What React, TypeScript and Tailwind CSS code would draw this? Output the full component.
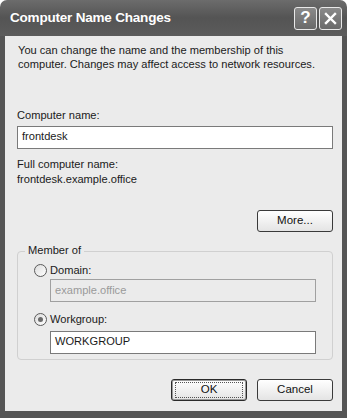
import React from 'react';

const font = { fontFamily: '"Liberation Sans", Arial, sans-serif' };

const Radio: React.FC<{ checked?: boolean }> = ({ checked }) => (
  <span className="relative flex h-[13px] w-[13px] shrink-0 items-center justify-center rounded-full border border-[#5a5a5a] bg-gradient-to-br from-[#dcdcdc] to-white">
    {checked && <span className="h-[5px] w-[5px] rounded-full bg-[#6a6a6a]" />}
  </span>
);

const Button: React.FC<{ label: string; isDefault?: boolean }> = ({ label, isDefault }) => (
  <div
    className={
      'flex h-[22px] w-[76px] items-center justify-center rounded-[3px] border bg-gradient-to-b from-white to-[#e4e4e4] text-[11.5px] text-[#111] ' +
      (isDefault ? 'border-[#2a2a2a] shadow-[inset_0_0_0_1px_#9a9a9a]' : 'border-[#3a3a3a]')
    }
  >
    {isDefault ? (
      <span className="flex h-[16px] w-[68px] items-center justify-center border border-dotted border-[#555]">{label}</span>
    ) : (
      label
    )}
  </div>
);

const App: React.FC = () => {
  return (
    <div className="h-[418px] w-[350px] bg-white" style={font}>
      <div className="flex h-[418px] w-[347px] flex-col">
        {/* title bar */}
        <div className="flex h-[36px] shrink-0 items-center justify-between rounded-t-[7px] bg-gradient-to-b from-[#6c6c6c] via-[#545454] to-[#5c5c5c] pl-[10px] pr-[5px]">
          <span className="text-[13.5px] font-bold tracking-[-0.2px] text-white">Computer Name Changes</span>
          <div className="flex gap-[2px]">
            <div className="flex h-[23px] w-[23px] items-center justify-center rounded-[3px] border border-[#e8e8e8] bg-gradient-to-b from-[#8a8a8a] to-[#6a6a6a] text-[17px] font-bold text-white">
              ?
            </div>
            <div className="flex h-[23px] w-[23px] items-center justify-center rounded-[3px] border border-[#e8e8e8] bg-gradient-to-b from-[#8a8a8a] to-[#6a6a6a]">
              <svg width="13" height="13" viewBox="0 0 13 13">
                <path d="M2 2 L11 11 M11 2 L2 11" stroke="white" strokeWidth="2.4" strokeLinecap="square" />
              </svg>
            </div>
          </div>
        </div>

        {/* body */}
        <div className="flex flex-1 flex-col border-x-[5px] border-b-[7px] border-[#555] bg-[#ebebeb] pl-[12px] pr-[9px] text-[11.1px] leading-[13.5px] text-[#1a1a1a]">
          <p className="mt-[8px] pl-[1px]">
            You can change the name and the membership of this
            <br />
            computer. Changes may affect access to network resources.
          </p>

          <p className="mt-[38px]">Computer name:</p>
          <div className="mt-[3px] flex h-[23px] items-center border border-[#7a7a7a] bg-white px-[4px]">frontdesk</div>

          <p className="mt-[9px]">Full computer name:</p>
          <p className="mt-[2px]">frontdesk.example.office</p>

          <div className="mt-[23px] flex justify-end">
            <Button label="More..." />
          </div>

          {/* group box */}
          <div className="relative mt-[19px] h-[109px] rounded-[4px] border border-[#d0d0d0] px-[16px] pt-[12px]">
            <span className="absolute left-[7px] top-[-8px] bg-[#ebebeb] px-[3px]">Member of</span>
            <div className="flex items-center gap-[3px]">
              <Radio />
              <span>Domain:</span>
            </div>
            <div className="ml-[16px] mt-[2px] flex h-[23px] items-center border border-[#a0a0a0] bg-[#ebebeb] px-[4px] text-[#9a9a9a]">
              example.office
            </div>
            <div className="mt-[11px] flex items-center gap-[3px]">
              <Radio checked />
              <span>Workgroup:</span>
            </div>
            <div className="ml-[16px] mt-[4px] flex h-[23px] items-center border border-[#7a7a7a] bg-white px-[4px]">
              WORKGROUP
            </div>
          </div>

          <div className="mt-[19px] flex justify-end gap-[10px]">
            <Button label="OK" isDefault />
            <Button label="Cancel" />
          </div>
        </div>
      </div>
    </div>
  );
};

export default App;
